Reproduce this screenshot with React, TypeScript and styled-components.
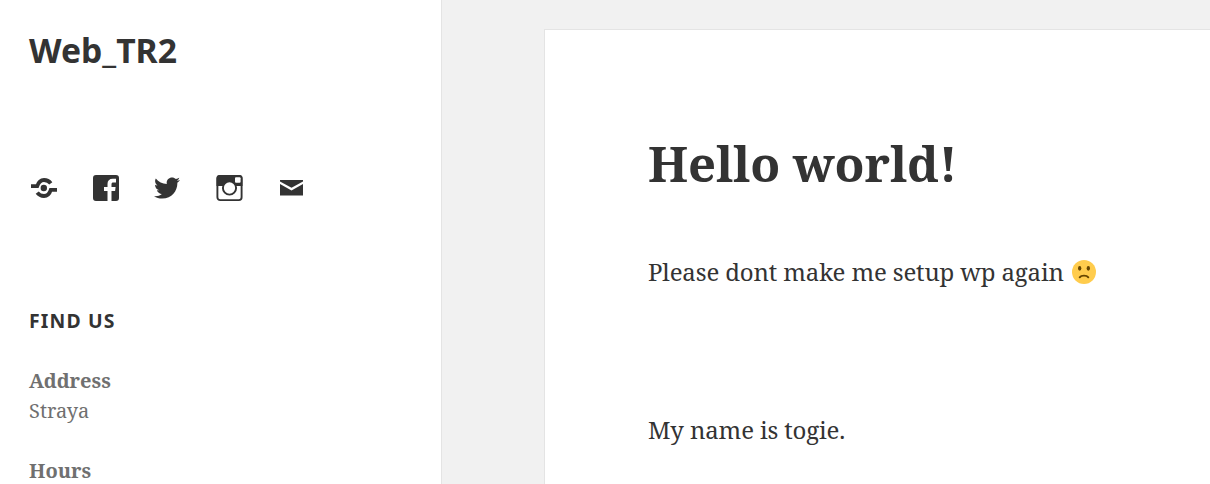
import React from 'react';
import styled, { createGlobalStyle } from 'styled-components';
import { FaTwitter } from 'react-icons/fa';

const serif = '"Noto Serif", "Droid Serif", "DejaVu Serif Condensed", "DejaVu Serif", serif';
const sans = '"Noto Sans", "Open Sans", sans-serif';

const GlobalStyle = createGlobalStyle`
  *, *::before, *::after { box-sizing: border-box; }
  body { margin: 0; background: #f1f1f1; color: #333; font-family: ${serif}; }
  h1, h2, p, ul { margin: 0; padding: 0; }
`;

const Page = styled.div`
  display: flex;
  height: 484px;
  overflow: hidden;
`;

const Sidebar = styled.aside`
  flex: none;
  width: 442px;
  padding: 28px 29px 0;
  background: #fff;
  border-right: 1px solid #e4e4e4;
`;

const SiteTitle = styled.h1`
  height: 44px;
  font: 700 33.700px/44px ${sans};
`;

const SocialNav = styled.nav`
  display: flex;
  gap: 30px;
  margin: 100px 0 104px;
  svg { display: block; flex: none; }
`;

const WidgetTitle = styled.h2`
  height: 26px;
  font: 700 19.400px/26px ${sans};
  letter-spacing: 1.150px;
  text-transform: uppercase;
`;

const Details = styled.div`
  margin-top: 32px;
  color: #707070;
  font-size: 20px;
  line-height: 30px;
  white-space: nowrap;
`;

const Entry = styled.p`
  & + & { margin-top: 30px; }
`;

const Line = styled.span<{ $strong?: boolean }>`
  display: block;
  font-weight: ${({ $strong }) => ($strong ? 700 : 400)};
`;

const Main = styled.main`
  flex: 1;
  min-width: 0;
  padding: 29px 0 0 102px;
`;

const Article = styled.article`
  height: 470px;
  padding: 103px 0 0 103px;
  background: #fff;
  border: 1px solid #e4e4e4;
  border-width: 1px 0 0 1px;
  white-space: nowrap;
`;

const PostTitle = styled.h2`
  height: 60px;
  font-size: 49px;
  line-height: 60px;
  letter-spacing: -0.130px;
`;

const Paragraph = styled.p<{ $gap: number }>`
  display: flex;
  align-items: center;
  height: 40px;
  margin-top: ${({ $gap }) => $gap}px;
  font-size: 24px;
  line-height: 40px;
  letter-spacing: -0.140px;
`;

const Emoji = styled.svg`
  flex: none;
  margin-left: 8px;
`;

const ShareIcon = () => (
  <svg width="32" height="32" viewBox="0 0 32 32" fill="none" stroke="#333">
    <circle cx="14.800" cy="16" r="3.200" fill="#333" stroke="none" />
    <path d="M2 14.200h6.200C9.500 10.200 12 8 15 8c2.800 0 5 1 6.800 3.400M28 17.800h-6.200C20.500 21.800 18 24 15 24c-2.800 0-5-1-6.800-3.400" strokeWidth="3.800" />
  </svg>
);

const FacebookIcon = () => (
  <svg width="32" height="32" viewBox="0 0 32 32" fill="#333">
    <path d="M5 3h20A3 3 0 0 1 28 6v20a3 3 0 0 1-3 3H20.500V19h3.600l.5-4h-4.100v-2.400c0-1.400.5-2 1.900-2H25V6.800h-3.200c-3.500 0-5.300 2-5.300 5.100V15h-3.500v4h3.500v10H5A3 3 0 0 1 2 26V6A3 3 0 0 1 5 3z" />
  </svg>
);

const TwitterBox = styled.span`
  display: flex;
  align-items: center;
  width: 32px;
  height: 32px;
  color: #333;
  padding-left: 1px;
`;

const InstagramIcon = () => (
  <svg width="32" height="32" viewBox="0 0 32 32">
    <rect x="2.400" y="3.900" width="24.200" height="24.200" rx="2.800" fill="#fff" stroke="#333" strokeWidth="1.900" />
    <path d="M1.500 14V6A3 3 0 0 1 4.500 3h20A3 3 0 0 1 27.500 6v8z" fill="#333" />
    <circle cx="14.500" cy="16" r="6.600" fill="#fff" stroke="#333" strokeWidth="1.900" />
    <rect x="20" y="5.200" width="5.600" height="5.600" rx="1" fill="#fff" />
  </svg>
);

const MailIcon = () => (
  <svg width="32" height="32" viewBox="0 0 32 32" fill="#333">
    <path d="M3 8h23v1.600l-11.500 6.200L3 9.600zM3 12l11.500 6.600L26 12v11.500H3z" />
  </svg>
);

export default function App() {
  return (
    <>
      <GlobalStyle />
      <Page>
        <Sidebar>
          <SiteTitle>Web_TR2</SiteTitle>
          <SocialNav>
            <ShareIcon />
            <FacebookIcon />
            <TwitterBox><FaTwitter size={26} /></TwitterBox>
            <InstagramIcon />
            <MailIcon />
          </SocialNav>
          <WidgetTitle>Find us</WidgetTitle>
          <Details>
            <Entry>
              <Line $strong>Address</Line>
              <Line>Straya</Line>
            </Entry>
            <Entry>
              <Line $strong>Hours</Line>
            </Entry>
          </Details>
        </Sidebar>
        <Main>
          <Article>
            <PostTitle>Hello world!</PostTitle>
            <Paragraph $gap={59}>
              Please dont make me setup wp again
              <Emoji width="24" height="24" viewBox="0 0 36 36">
                <circle cx="18" cy="18" r="18" fill="#ffcc4d" />
                <ellipse cx="11.500" cy="12.500" rx="2.500" ry="3.500" fill="#664500" />
                <ellipse cx="24.500" cy="12.500" rx="2.500" ry="3.500" fill="#664500" />
                <path d="M11.500 26C13 24 15.500 23.500 18 23.500s5 .5 6.500 2.500" fill="none" stroke="#664500" strokeWidth="2.800" strokeLinecap="round" />
              </Emoji>
            </Paragraph>
            <Paragraph $gap={118}>My name is togie.</Paragraph>
          </Article>
        </Main>
      </Page>
    </>
  );
}
